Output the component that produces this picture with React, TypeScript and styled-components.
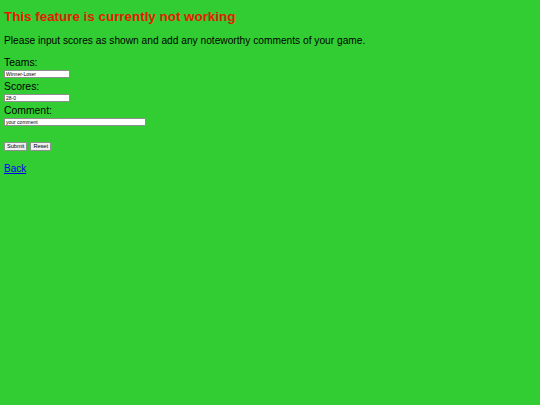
import React from 'react';
import styled, { createGlobalStyle } from 'styled-components';

const GlobalStyle = createGlobalStyle`
  html, body {
    background: #32cd32;
  }
  body {
    margin: 0;
    padding: 4px;
    font-family: "Liberation Sans", Arial, sans-serif;
    color: #000;
  }
`;

const Title = styled.h2`
  margin: 4px 0 0;
  font-size: 13.4px;
  line-height: 18px;
  font-weight: bold;
  color: #e31b00;
`;

const Intro = styled.p`
  margin: 8px 0 0;
  font-size: 10.2px;
  line-height: 14px;
`;

const Form = styled.form`
  margin-top: 8px;
  display: flex;
  flex-direction: column;
  align-items: flex-start;
`;

const Label = styled.label`
  font-size: 10.4px;
  line-height: 13px;
`;

const Field = styled.input<{ $wide?: boolean }>`
  box-sizing: border-box;
  width: ${p => (p.$wide ? '142px' : '66px')};
  height: 8px;
  margin: 1px 0 2px;
  padding: 0 1px;
  border: 1px solid #8f8f8f;
  background: #fff;
  font-family: inherit;
  font-size: 5px;
  color: #000;
`;

const Actions = styled.div`
  display: flex;
  gap: 3px;
  margin-top: 14px;
`;

const Button = styled.button`
  box-sizing: border-box;
  height: 9px;
  padding: 0 2px;
  border: 1px solid #8f8f8f;
  border-radius: 1px;
  background: #efefef;
  font-family: inherit;
  font-size: 5.6px;
  line-height: 7px;
  color: #000;
`;

const BackLink = styled.a`
  display: inline-block;
  margin-top: 12px;
  font-size: 10px;
  color: #0000ee;
  text-decoration: underline;
`;

export default function App() {
  return (
    <>
      <GlobalStyle />
      <Title>This feature is currently not working</Title>
      <Intro>Please input scores as shown and add any noteworthy comments of your game.</Intro>
      <Form onSubmit={e => e.preventDefault()}>
        <Label htmlFor="teams">Teams:</Label>
        <Field id="teams" defaultValue="Winner-Loser" />
        <Label htmlFor="scores">Scores:</Label>
        <Field id="scores" defaultValue="28-0" />
        <Label htmlFor="comment">Comment:</Label>
        <Field id="comment" $wide defaultValue="your comment" />
        <Actions>
          <Button type="submit">Submit</Button>
          <Button type="reset">Reset</Button>
        </Actions>
      </Form>
      <BackLink href="#">Back</BackLink>
    </>
  );
}
